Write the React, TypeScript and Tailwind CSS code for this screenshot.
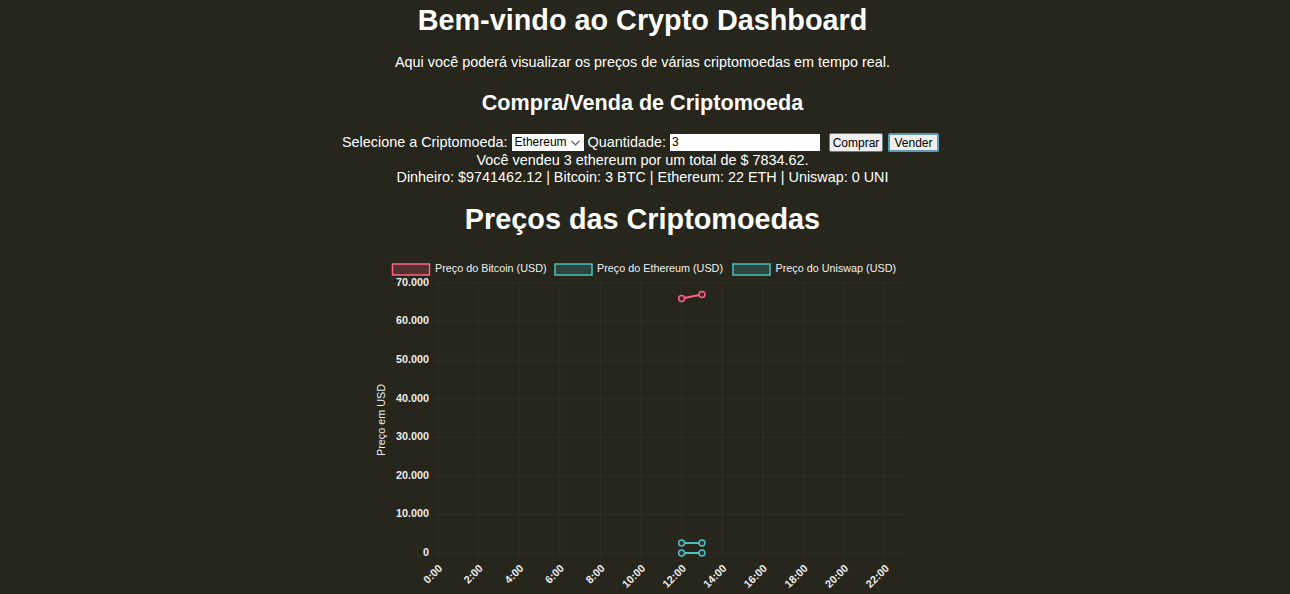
import React from 'react';

const PINK = 'rgb(255,99,132)';
const PINK_FILL = 'rgba(255,99,132,0.2)';
const TEAL = 'rgb(75,192,192)';
const TEAL_FILL = 'rgba(75,192,192,0.2)';

// chart geometry (svg coords, svg sits at page x=370, y=250)
const X0 = 68;
const STEP = 20.304;
const Y0 = 302;
const YSTEP = 38.571;

const xAt = (i: number) => X0 + i * STEP;
const yAt = (v: number) => Y0 - (v / 10000) * YSTEP;

const series = [
  { color: PINK, pts: [[12, 66000], [13, 67000]] },
  { color: TEAL, pts: [[12, 2600], [13, 2600]] },
  { color: TEAL, pts: [[12, 7], [13, 7]] },
];

const legend = [
  { box: 22.5, text: 65, label: 'Preço do Bitcoin (USD)', color: PINK, fill: PINK_FILL },
  { box: 185, text: 227, label: 'Preço do Ethereum (USD)', color: TEAL, fill: TEAL_FILL },
  { box: 363, text: 405.5, label: 'Preço do Uniswap (USD)', color: TEAL, fill: TEAL_FILL },
];

function PriceChart() {
  const yTicks = [70000, 60000, 50000, 40000, 30000, 20000, 10000, 0];
  const xTicks = Array.from({ length: 12 }, (_, k) => k * 2);

  return (
    <svg width="550" height="344" viewBox="0 0 550 344" style={{ fontFamily: '"Liberation Sans", Arial, sans-serif' }}>
      {legend.map((l) => (
        <g key={l.label}>
          <rect x={l.box} y={13} width={37} height={11} fill={l.fill} stroke={l.color} strokeWidth={1.5} />
          <text x={l.text} y={18.5} fontSize="10.8" fill="#f0f0f0" dominantBaseline="middle">
            {l.label}
          </text>
        </g>
      ))}

      {yTicks.map((v) => (
        <g key={v}>
          <line x1={X0 - 5} x2={535} y1={yAt(v)} y2={yAt(v)} stroke="#ffffff" strokeOpacity={0.045} />
          <text x={59} y={yAt(v)} fontSize="10.8" fontWeight="bold" fill="#ececec" textAnchor="end" dominantBaseline="middle">
            {v === 0 ? '0' : `${v / 1000}.000`}
          </text>
        </g>
      ))}

      {xTicks.map((h) => (
        <g key={h}>
          <line x1={xAt(h)} x2={xAt(h)} y1={yAt(70000)} y2={Y0 + 5} stroke="#ffffff" strokeOpacity={0.045} />
          <text
            fontSize="10.8"
            fontWeight="bold"
            fill="#ececec"
            textAnchor="end"
            transform={`translate(${xAt(h) + 5}, 318) rotate(-45)`}
          >
            {`${h}:00`}
          </text>
        </g>
      ))}

      <text
        fontSize="10.8"
        fill="#ececec"
        textAnchor="middle"
        dominantBaseline="middle"
        transform="translate(12, 169) rotate(-90)"
      >
        Preço em USD
      </text>

      {series.map((s, i) => (
        <g key={i}>
          <line
            x1={xAt(s.pts[0][0])}
            y1={yAt(s.pts[0][1])}
            x2={xAt(s.pts[1][0])}
            y2={yAt(s.pts[1][1])}
            stroke={s.color}
            strokeWidth={2}
          />
          {s.pts.map(([h, v]) => (
            <circle key={h} cx={xAt(h)} cy={yAt(v)} r={3} fill="#3a2a2a" stroke={s.color} strokeWidth={1.5} />
          ))}
        </g>
      ))}
    </svg>
  );
}

export default function App() {
  return (
    <div className="h-[594px] overflow-hidden bg-[#26261c] text-white font-['Liberation_Sans',Arial,sans-serif]">
      <div className="w-[1285px] flex flex-col items-center text-center">
        <h1 className="mt-[4px] text-[28.8px] leading-[33px] font-bold">Bem-vindo ao Crypto Dashboard</h1>
        <p className="mt-[17px] text-[14.4px] leading-[17px]">
          Aqui você poderá visualizar os preços de várias criptomoedas em tempo real.
        </p>
        <h2 className="mt-[19px] text-[21.6px] leading-[25px] font-bold">Compra/Venda de Criptomoeda</h2>

        <div className="mt-[18px] flex items-center h-[19px] text-[14.4px] leading-[17px] pr-[4px]">
          <span>Selecione a Criptomoeda:</span>
          <div className="ml-[4px] flex items-center justify-between w-[72px] h-[17px] bg-white text-black text-[12px] pl-[3px] pr-[4px]">
            <span>Ethereum</span>
            <svg width="9" height="6" viewBox="0 0 9 6" fill="none" stroke="#555" strokeWidth="1.2">
              <path d="M0.5 0.8 L4.5 4.8 L8.5 0.8" />
            </svg>
          </div>
          <span className="ml-[4px]">Quantidade:</span>
          <div className="ml-[4px] w-[150px] h-[17px] bg-white text-black text-[12px] leading-[17px] text-left pl-[2px]">3</div>
          <button className="ml-[9px] w-[54px] h-[19px] bg-[#efefef] border border-[#767676] rounded-[2px] text-black text-[12px] leading-[16px]">
            Comprar
          </button>
          <button className="ml-[5px] w-[51px] h-[19px] bg-[#efefef] border-2 border-[#5d9ab8] rounded-[2px] text-black text-[12px] leading-[14px]">
            Vender
          </button>
        </div>
        <p className="text-[14.4px] leading-[16.5px]">Você vendeu 3 ethereum por um total de $ 7834.62.</p>
        <p className="text-[14.4px] leading-[16.5px]">
          Dinheiro: $9741462.12 | Bitcoin: 3 BTC | Ethereum: 22 ETH | Uniswap: 0 UNI
        </p>

        <h1 className="mt-[18px] text-[28.8px] leading-[33px] font-bold">Preços das Criptomoedas</h1>
        <div className="mt-[15px] ml-[5px]">
          <PriceChart />
        </div>
      </div>
    </div>
  );
}
